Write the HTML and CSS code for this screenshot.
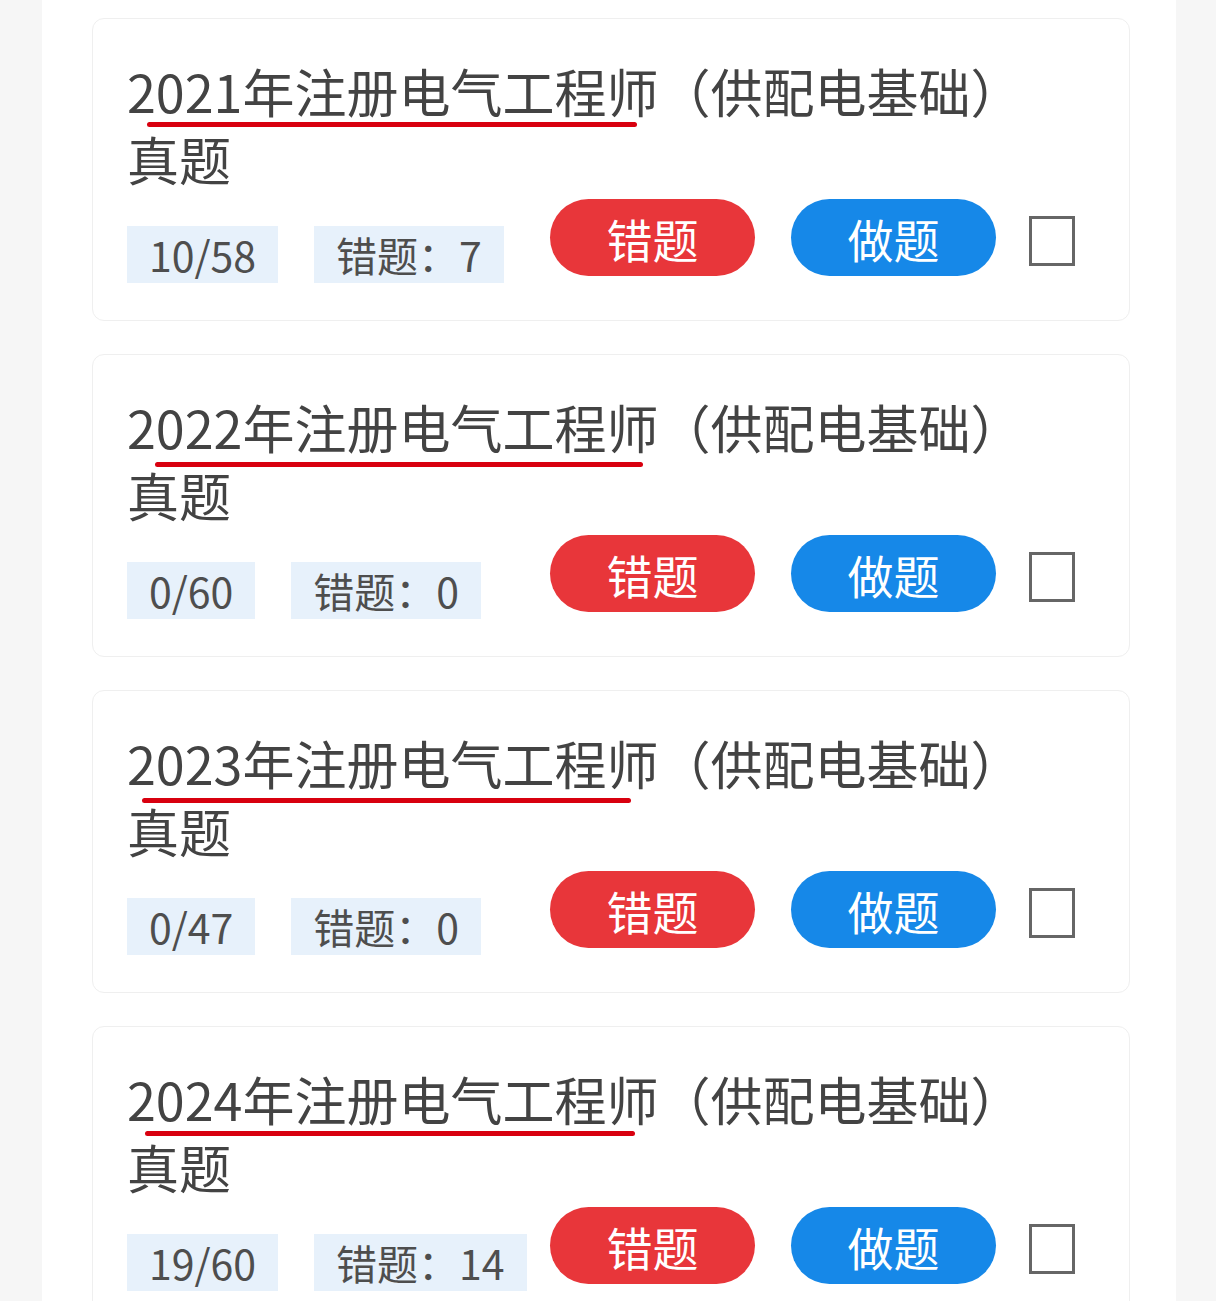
FILE: index.html
```html
<!DOCTYPE html>
<html lang="zh-CN">
<head>
  <meta charset="UTF-8" />
  <meta name="viewport" content="width=device-width, initial-scale=1.0" />
  <title>真题列表</title>
  <link rel="stylesheet" href="styles.css">
</head>
<body>
  <main class="page">
    <!-- 2021 -->
    <section class="card">
      <h2 class="title">2021年注册电气工程师（供配电基础）真题</h2>
      <span class="mark mark-1"></span>
      <div class="row">
        <div class="tags">
          <span class="tag">10/58</span>
          <span class="tag">错题：7</span>
        </div>
        <div class="actions">
          <button class="btn btn-wrong">错题</button>
          <button class="btn btn-do">做题</button>
          <span class="check"></span>
        </div>
      </div>
    </section>

    <!-- 2022 -->
    <section class="card">
      <h2 class="title">2022年注册电气工程师（供配电基础）真题</h2>
      <span class="mark mark-2"></span>
      <div class="row">
        <div class="tags">
          <span class="tag">0/60</span>
          <span class="tag">错题：0</span>
        </div>
        <div class="actions">
          <button class="btn btn-wrong">错题</button>
          <button class="btn btn-do">做题</button>
          <span class="check"></span>
        </div>
      </div>
    </section>

    <!-- 2023 -->
    <section class="card">
      <h2 class="title">2023年注册电气工程师（供配电基础）真题</h2>
      <span class="mark mark-3"></span>
      <div class="row">
        <div class="tags">
          <span class="tag">0/47</span>
          <span class="tag">错题：0</span>
        </div>
        <div class="actions">
          <button class="btn btn-wrong">错题</button>
          <button class="btn btn-do">做题</button>
          <span class="check"></span>
        </div>
      </div>
    </section>

    <!-- 2024 -->
    <section class="card">
      <h2 class="title">2024年注册电气工程师（供配电基础）真题</h2>
      <span class="mark mark-4"></span>
      <div class="row">
        <div class="tags">
          <span class="tag">19/60</span>
          <span class="tag">错题：14</span>
        </div>
        <div class="actions">
          <button class="btn btn-wrong">错题</button>
          <button class="btn btn-do">做题</button>
          <span class="check"></span>
        </div>
      </div>
    </section>
  </main>
</body>
</html>
```

FILE: styles.css
```css
/* 真题列表 */
:root {
  --red: #e8363a;
  --blue: #1688e8;
  --text: #434343;
  --tag-bg: #e7f1fb;
}
* { box-sizing: border-box; }
body {
  margin: 0;
  background: #f6f6f6;
  font-family: "Noto Sans CJK SC", "Noto Sans", sans-serif;
}
.page {
  margin: 0 40px 0 42px;
  background: #fff;
  padding: 18px 46px 1px 50px;
  min-height: 1301px;
}
.card {
  position: relative;
  border: 1px solid #efefef;
  border-radius: 12px;
  padding: 38px 54px 37px 34px;
  margin-bottom: 33px;
}
.title {
  margin: 0 30px 0 0;
  font-size: 52px;
  line-height: 68px;
  font-weight: 400;
  color: var(--text);
}
/* 红色手绘下划线 */
.mark {
  position: absolute;
  height: 5px;
  width: 490px;
  border-radius: 3px;
  background: #d8000f;
}
.mark-1 { top: 103px; left: 54px; }
.mark-2 { top: 107px; left: 62px; width: 488px; }
.mark-3 { top: 107px; left: 49px; width: 489px; }
.mark-4 { top: 104px; left: 52px; }

.row {
  display: flex;
  align-items: flex-start;
  margin-top: 6px;
}
.tags {
  display: flex;
  gap: 36px;
  margin-top: 27px;
}
.tag {
  height: 57px;
  line-height: 57px;
  padding: 0 22px;
  background: var(--tag-bg);
  color: #4e4e4e;
  font-size: 41px;
  white-space: nowrap;
}
.actions {
  margin-left: auto;
  flex-shrink: 0;
  display: flex;
  align-items: center;
}
.btn {
  width: 205px; height: 77px;
  border: none;
  border-radius: 39px;
  color: #fff;
  font-family: inherit;
  font-size: 46px;
  padding: 0;
  cursor: pointer;
}
.btn-wrong { background: var(--red); }
.btn-do { background: var(--blue); margin-left: 36px; }
.check {
  width: 46px; height: 50px;
  margin-left: 33px;
  margin-top: 7px;
  border: 3px solid #666;
}
```
